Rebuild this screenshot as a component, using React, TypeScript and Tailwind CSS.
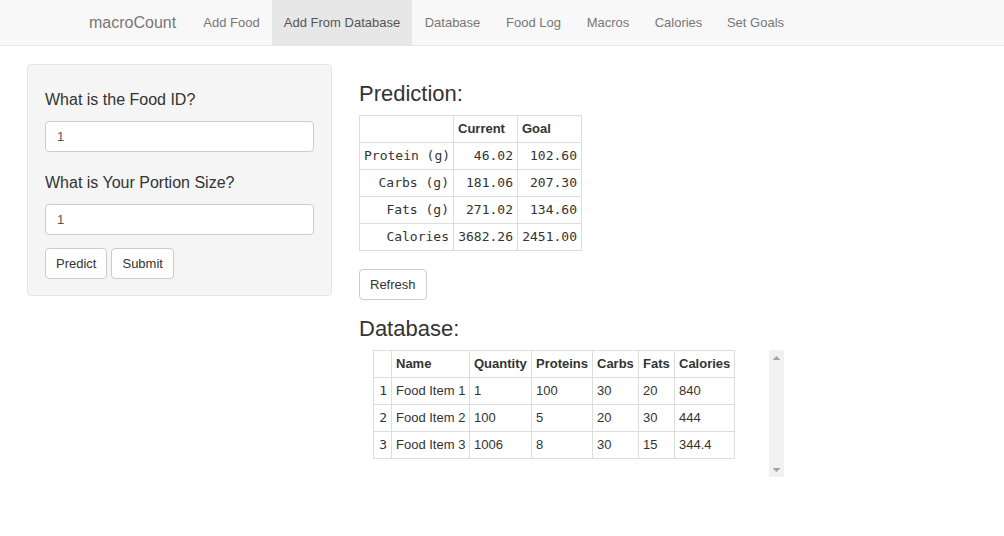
import { useState } from "react";

const NAV = [
  { label: "Add Food", width: "w-[81px]" },
  { label: "Add From Database", width: "w-[140px]" },
  { label: "Database", width: "w-[81px]" },
  { label: "Food Log", width: "w-[81px]" },
  { label: "Macros", width: "w-[68px]" },
  { label: "Calories", width: "w-[73px]" },
  { label: "Set Goals", width: "w-[81px]" },
];

const PREDICTION = [
  ["Protein (g)", "46.02", "102.60"],
  ["Carbs (g)", "181.06", "207.30"],
  ["Fats (g)", "271.02", "134.60"],
  ["Calories", "3682.26", "2451.00"],
];

const COLUMNS = [
  { label: "Name", width: "w-[78px]" },
  { label: "Quantity", width: "w-[62px]" },
  { label: "Proteins", width: "w-[61px]" },
  { label: "Carbs", width: "w-[46px]" },
  { label: "Fats", width: "w-[36px]" },
  { label: "Calories", width: "w-[60px]" },
];

const FOODS = [
  ["Food Item 1", "1", "100", "30", "20", "840"],
  ["Food Item 2", "100", "5", "20", "30", "444"],
  ["Food Item 3", "1006", "8", "30", "15", "344.4"],
];

const CELL = "border border-[#dddddd] px-1 py-1 whitespace-nowrap";
const MONO = "font-['DejaVu_Sans_Mono',monospace] font-normal text-right";

function Button({ children }: { children: string }) {
  return (
    <button
      type="button"
      className="h-[31px] rounded-[4px] border border-[#cccccc] bg-white px-[10px] text-[#333333] hover:bg-[#e6e6e6]"
    >
      {children}
    </button>
  );
}

function NumberField({ id, label }: { id: string; label: string }) {
  const [value, setValue] = useState("1");
  return (
    <div>
      <label htmlFor={id} className="mb-[11px] block text-base leading-5">
        {label}
      </label>
      <input
        id={id}
        value={value}
        onChange={(e) => setValue(e.target.value)}
        className="block h-[31px] w-full rounded-[4px] border border-[#cccccc] bg-white px-[11px] text-[#555555]"
      />
    </div>
  );
}

function ScrollTrack() {
  return (
    <div
      aria-hidden="true"
      className="flex w-[15px] shrink-0 flex-col items-center justify-between bg-[#f1f1f1] pt-1.5 pb-[5px]"
    >
      <svg width="7" height="4" viewBox="0 0 7 4" fill="#a3a3a3">
        <path d="M3.5 0L7 3.5V4H0V3.5z" />
      </svg>
      <svg width="7" height="4" viewBox="0 0 7 4" fill="#a3a3a3">
        <path d="M0 0H7V.5L3.5 4L0 .5z" />
      </svg>
    </div>
  );
}

export default function App() {
  const [active, setActive] = useState("Add From Database");
  return (
    <div className="min-h-screen bg-white font-['Liberation_Sans',Arial,sans-serif] text-[13px] leading-[18px] text-[#333333]">
      <nav className="flex items-start border-b border-[#e7e7e7] bg-[#f8f8f8] pl-[89px]">
        <a href="#home" className="w-[102px] shrink-0 pt-[14px] text-base leading-[18px] text-[#777777]">
          macroCount
        </a>
        <ul className="flex">
          {NAV.map(({ label, width }) => (
            <li key={label}>
              <a
                href="#tab"
                onClick={() => setActive(label)}
                className={`${width} block pt-[14px] pb-[13px] text-center whitespace-nowrap ${
                  active === label ? "bg-[#e7e7e7] text-[#555555]" : "text-[#777777]"
                }`}
              >
                {label}
              </a>
            </li>
          ))}
        </ul>
      </nav>

      <main className="flex items-start gap-[27px] px-[27px] pt-[18px]">
        <form
          className="flex w-[305px] shrink-0 flex-col rounded-[4px] border border-[#e3e3e3] bg-[#f5f5f5] px-[17px] pt-[25px] pb-4"
          onSubmit={(e) => e.preventDefault()}
        >
          <div className="flex flex-col gap-[21px]">
            <NumberField id="food-id" label="What is the Food ID?" />
            <NumberField id="portion" label="What is Your Portion Size?" />
          </div>
          <div className="mt-[13px] flex gap-1">
            <Button>Predict</Button>
            <Button>Submit</Button>
          </div>
        </form>

        <div className="max-w-[425px] flex-1">
          <section className="pt-[18px]">
            <h3 className="mb-[9px] text-[22px] leading-6">Prediction:</h3>
            <table className="mb-[18px] w-[223px] table-fixed border-collapse">
              <thead>
                <tr>
                  <th className={`${CELL} w-[94px]`}>&nbsp;</th>
                  <th className={`${CELL} text-left`}>Current</th>
                  <th className={`${CELL} text-left`}>Goal</th>
                </tr>
              </thead>
              <tbody>
                {PREDICTION.map(([name, current, goal]) => (
                  <tr key={name}>
                    <th scope="row" className={`${CELL} ${MONO}`}>{name}</th>
                    <td className={`${CELL} ${MONO}`}>{current}</td>
                    <td className={`${CELL} ${MONO}`}>{goal}</td>
                  </tr>
                ))}
              </tbody>
            </table>
            <Button>Refresh</Button>
          </section>

          <section className="pt-[17px]">
            <h3 className="mb-[9px] text-[22px] leading-6">Database:</h3>
            <div className="flex h-[127px] justify-between pl-[14px]">
              <table className="w-[362px] table-fixed border-collapse self-start">
                <thead>
                  <tr>
                    <th className={`${CELL} w-[18px]`} />
                    {COLUMNS.map(({ label, width }) => (
                      <th key={label} className={`${CELL} ${width} text-left`}>{label}</th>
                    ))}
                  </tr>
                </thead>
                <tbody>
                  {FOODS.map((row, i) => (
                    <tr key={row[0]}>
                      <th scope="row" className={`${CELL} ${MONO}`}>{i + 1}</th>
                      {row.map((cell, j) => (
                        <td key={j} className={CELL}>{cell}</td>
                      ))}
                    </tr>
                  ))}
                </tbody>
              </table>
              <ScrollTrack />
            </div>
          </section>
        </div>
      </main>
    </div>
  );
}
